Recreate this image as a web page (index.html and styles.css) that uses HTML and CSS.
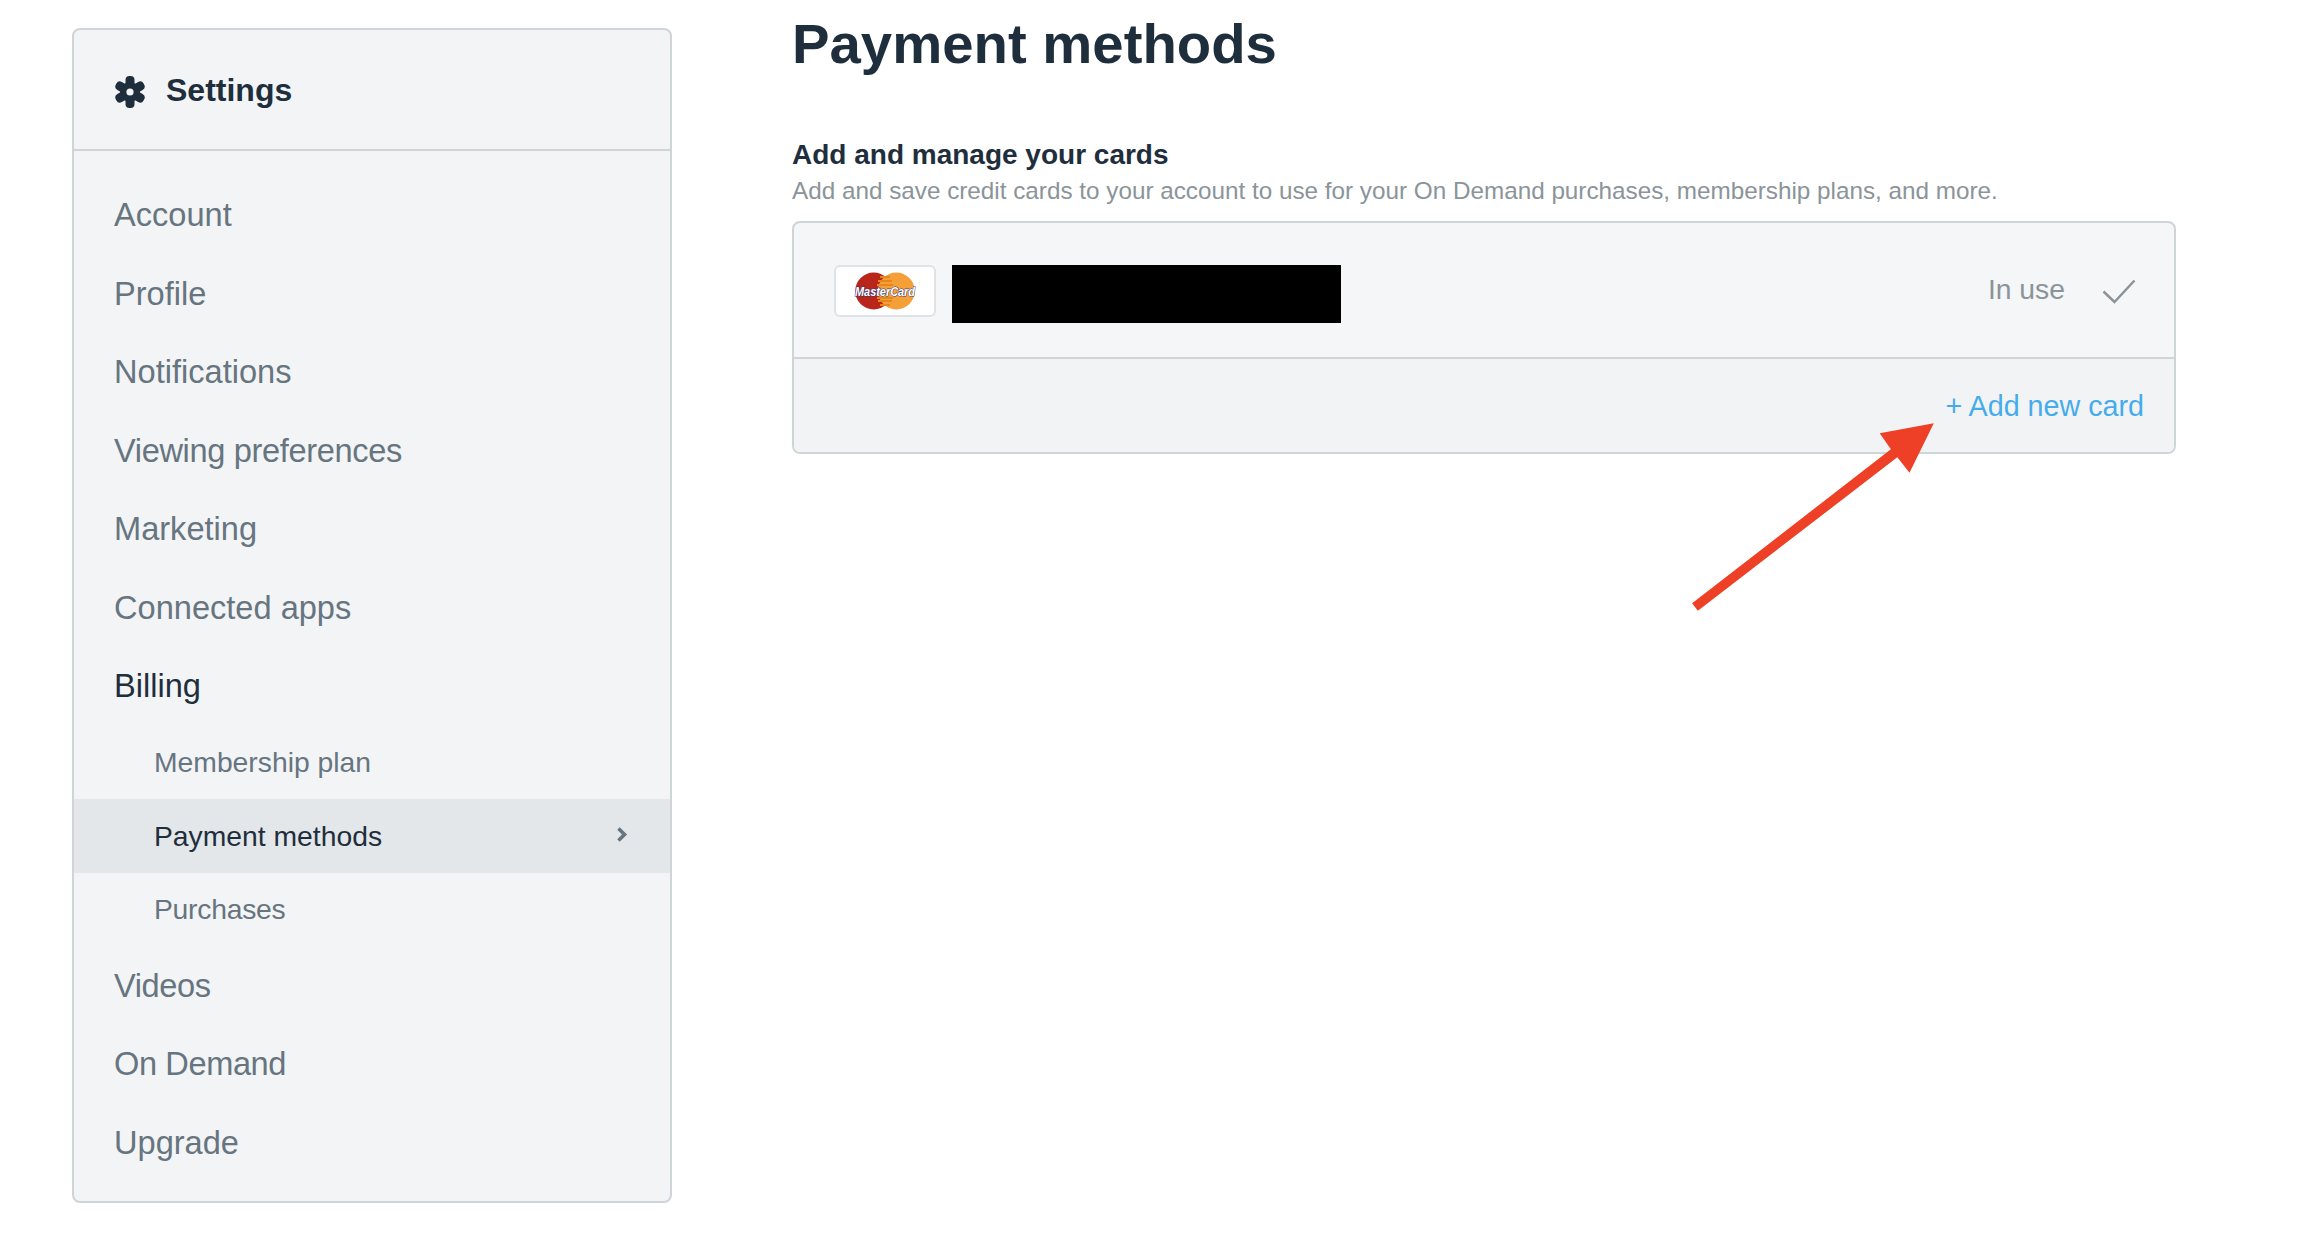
FILE: index.html
```html
<!DOCTYPE html>
<html lang="en">
<head>
<meta charset="utf-8">
<title>Payment methods</title>
<link rel="stylesheet" href="styles.css">
</head>
<body>
<div class="page">
  <aside class="sidebar">
    <div class="side-head">
      <svg class="gear" viewBox="0 0 32 32" width="32" height="32" aria-hidden="true">
        <g fill="#1f2e3d">
          <circle cx="16" cy="16" r="10"/>
          <rect x="11.500" y="0" width="9" height="32" rx="4"/>
          <rect x="11.500" y="0" width="9" height="32" rx="4" transform="rotate(60 16 16)"/>
          <rect x="11.500" y="0" width="9" height="32" rx="4" transform="rotate(120 16 16)"/>
        </g>
        <circle cx="16" cy="16" r="3.600" fill="#f3f4f6"/>
      </svg>
      <span class="side-title">Settings</span>
    </div>
    <nav class="side-nav">
      <a class="nav-item">Account</a>
      <a class="nav-item">Profile</a>
      <a class="nav-item">Notifications</a>
      <a class="nav-item nav-tight">Viewing preferences</a>
      <a class="nav-item">Marketing</a>
      <a class="nav-item">Connected apps</a>
      <a class="nav-item nav-open">Billing</a>
      <a class="sub-item">Membership plan</a>
      <a class="sub-item sub-active">Payment methods
        <svg class="chev" viewBox="0 0 12 18" width="12" height="18" aria-hidden="true"><path d="M2.500 2.500L8.500 8.500L2.500 14.500" fill="none" stroke="#66757f" stroke-width="3.600"/></svg>
      </a>
      <a class="sub-item sub-tight">Purchases</a>
      <a class="nav-item nav-tighter">Videos</a>
      <a class="nav-item nav-tighter">On Demand</a>
      <a class="nav-item">Upgrade</a>
    </nav>
  </aside>
  <main class="main">
    <h1 class="title">Payment methods</h1>
    <h2 class="section-title">Add and manage your cards</h2>
    <p class="section-desc">Add and save credit cards to your account to use for your On Demand purchases, membership plans, and more.</p>
    <section class="panel">
      <div class="card-row">
        <div class="card-badge">
          <svg viewBox="0 0 84 40" width="84" height="40" aria-hidden="true">
            <circle cx="30.700" cy="20" r="18.500" fill="#b9251a"/>
            <circle cx="53.300" cy="20" r="18.500" fill="#f49f37"/>
            <path d="M37 6h10M35 10h14M34 14h16M34 27h16M35 30h14M37 34h10" stroke="#e8861e" stroke-width="2"/>
            <text x="42" y="25" class="mc-text" text-anchor="middle" textLength="60" lengthAdjust="spacingAndGlyphs">MasterCard</text>
          </svg>
        </div>
        <div class="redact"></div>
        <span class="in-use">In use</span>
        <svg class="check" viewBox="0 0 34 26" width="34" height="26" aria-hidden="true"><path d="M1.500 12.500L12.500 23L32.500 1.500" fill="none" stroke="#8a9499" stroke-width="2.500"/></svg>
      </div>
      <div class="panel-foot">
        <a class="add-link">+ Add new card</a>
      </div>
    </section>
  </main>
</div>
<svg class="arrow" viewBox="0 0 2306 1238" width="2306" height="1238" aria-hidden="true">
  <polygon fill="#ee4026" points="1933.800,423.300 1879.700,433.300 1890.900,449.300 1692.100,603.300 1697.900,610.700 1897.300,457.300 1909.500,472.700"/>
</svg>
</body>
</html>
```
FILE: styles.css
```css
* { box-sizing: border-box; }
html, body { margin: 0; height: 100%; background: #fff; }
body { font-family: "Liberation Sans", Arial, sans-serif; color: #1f2e3d; overflow: hidden; position: relative; }
.page { display: flex; align-items: flex-start; padding: 28px 0 0 72px; height: 1238px; }

.sidebar { width: 600px; height: 1175px; flex: none; background: #f3f4f6; border: 2px solid #ced5d9; border-radius: 8px; overflow: hidden; }
.side-head { height: 121px; display: flex; align-items: center; padding: 2px 0 0 40px; gap: 20px; border-bottom: 2px solid #ced5d9; }
.gear { flex: none; margin-top: 3px; }
.side-title { font-size: 32px; font-weight: 700; }
.side-nav { display: flex; flex-direction: column; padding-top: 25px; }
.nav-item { height: 78.500px; line-height: 78.500px; padding-left: 40px; font-size: 32.600px; color: #66757f; }
.nav-tight { letter-spacing: -.35px; }
.nav-tighter { letter-spacing: -.4px; }
.nav-open { color: #1f2e3d; }
.sub-item { height: 73.700px; display: flex; align-items: center; justify-content: space-between; padding: 0 42px 0 80px; font-size: 28.300px; color: #66757f; }
.sub-tight { letter-spacing: -.25px; }
.sub-active { background: #e4e7e9; color: #1f2e3d; }
.chev { flex: none; margin-top: -2px; }

.main { margin-left: 120px; width: 1384px; flex: none; margin-top: -28px; }
.title { margin: 0; padding-top: 10px; font-size: 56.300px; line-height: 68px; font-weight: 700; color: #1f2e3d; }
.section-title { margin: 60px 0 0; font-size: 28px; line-height: 34px; font-weight: 700; }
.section-desc { margin: 2px 0 0; font-size: 24.270px; line-height: 34px; color: #8a9499; }
.panel { margin-top: 13px; border: 2px solid #ced5d9; border-radius: 8px; overflow: hidden; background: #f5f6f8; }
.card-row { height: 136px; display: flex; align-items: center; padding: 3px 38px 0 40px; border-bottom: 2px solid #ced5d9; }
.card-badge { width: 102px; height: 52px; background: #fff; border: 2px solid #dfe3e6; border-radius: 6px; display: flex; align-items: center; justify-content: center; margin-top: -2px; }
.mc-text { font: italic 700 13px "Liberation Sans", Arial, sans-serif; fill: #fff; stroke: #2a3a7c; stroke-width: 1px; paint-order: stroke; }
.redact { width: 389px; height: 58px; background: #000; margin-left: 16px; margin-top: 4px; }
.in-use { margin-left: auto; font-size: 28.300px; color: #8a9499; margin-top: -5px; }
.check { margin-left: 37px; flex: none; }
.panel-foot { height: 93px; background: #f2f3f5; display: flex; justify-content: flex-end; padding: 30px 30px 0 0; }
.add-link { font-size: 28.700px; line-height: 34px; color: #45aceb; }

.arrow { position: absolute; left: 0; top: 0; pointer-events: none; }
```
